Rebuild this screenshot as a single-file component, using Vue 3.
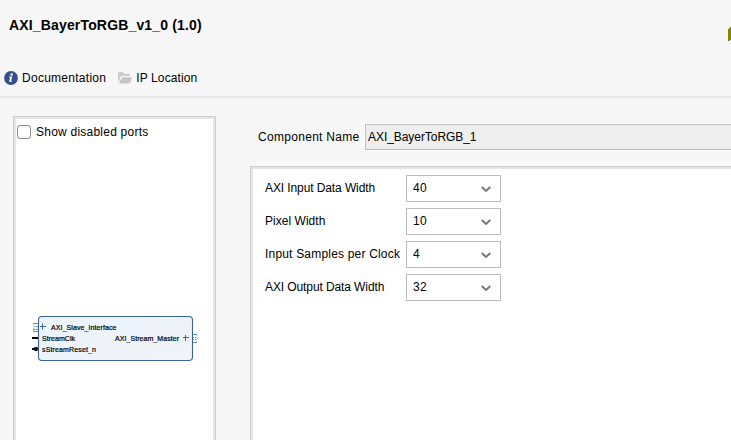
<script setup>
import { ref } from 'vue'

const showDisabled = ref(false)
const params = [
  { label: 'AXI Input Data Width', value: '40', cls: 'w-input' },
  { label: 'Pixel Width', value: '10', cls: 'w-pixel' },
  { label: 'Input Samples per Clock', value: '4', cls: 'w-samples' },
  { label: 'AXI Output Data Width', value: '32', cls: 'w-output' },
]
</script>

<template>
  <div class="window">
    <header class="header">
      <h1 class="title">AXI_BayerToRGB_v1_0 (1.0)</h1>
      <svg class="busy" width="3" height="16" viewBox="0 0 3 16" shape-rendering="crispEdges">
        <path d="M0 3L1 1L3 0V12L1 14H0Z" fill="#848500" />
      </svg>
      <nav class="toolbar">
        <a class="tool">
          <svg width="14" height="14" viewBox="0 0 14 14">
            <circle cx="7" cy="7" r="6.9" fill="#33508a" />
            <circle cx="7.7" cy="3.4" r="1.2" fill="#fff" />
            <path d="M5.2 5.5H8.3L7.2 10H8.2L7.9 10.8H5L6 6.4H5Z" fill="#fff" />
          </svg>
          <span class="doc">Documentation</span>
        </a>
        <a class="tool">
          <svg width="14" height="12" viewBox="0 0 14 12">
            <path d="M0 1Q0 0 1 0H4.5L6 1.8H11Q12 1.8 12 3V4H4Q2.8 4 2.3 5.2L0 11Z" fill="#cbcbcb" />
            <path d="M4.2 5.2H14L12.4 10.3Q12 11.5 10.8 11.5H0.8Z" fill="#c5c5c5" />
          </svg>
          <span class="loc">IP Location</span>
        </a>
      </nav>
    </header>

    <main class="body">
      <section class="ports">
        <label class="toggle">
          <input v-model="showDisabled" type="checkbox" class="check" />
          <span>Show disabled ports</span>
        </label>
        <svg class="diagram" width="170" height="50" viewBox="30 314 170 50">
          <defs>
            <linearGradient id="blockFill" x1="0" y1="0" x2="1" y2="1">
              <stop offset="0" stop-color="#ecf3fc" />
              <stop offset="1" stop-color="#f1f4f7" />
            </linearGradient>
          </defs>
          <rect x="38.5" y="316.5" width="154" height="44" rx="3.5" fill="url(#blockFill)" stroke="#3c62a0" stroke-width="1.1" />
          <g fill="none" stroke="#5c8fbd" shape-rendering="crispEdges">
            <path d="M33 323.5H38M33 331.5H38M193 334.5H197M193 342.5H197" />
            <path d="M33 326.5H35M36 326.5H38M33 329.5H35M36 329.5H38" />
            <path d="M193 337.5H194M195 337.5H197M193 339.5H194M195 339.5H197" />
          </g>
          <path d="M33.5 324V332M196.5 335V342" stroke="#a9cbe3" stroke-dasharray="1 1" />
          <path d="M40 326.5H46M42.5 323.5V329.5M183 337.5H189M185.5 335V341" stroke="#3c62a0" stroke-width="1" />
          <path d="M32 338H38M32 349H36" stroke="#000" stroke-width="2" />
          <circle cx="36" cy="349" r="2.2" fill="#111" />
          <g class="pins">
            <text x="51" y="330" textLength="65.5">AXI_Slave_Interface</text>
            <text x="42" y="341" textLength="33">StreamClk</text>
            <text x="42" y="352" textLength="54">sStreamReset_n</text>
            <text x="115" y="341" textLength="64">AXI_Stream_Master</text>
          </g>
        </svg>
      </section>

      <section class="config">
        <div class="name-row">
          <span class="name-label">Component Name</span>
          <div class="name-field">AXI_BayerToRGB_1</div>
        </div>
        <div class="params">
          <div v-for="p in params" :key="p.label" class="param">
            <span class="param-label"><span :class="p.cls">{{ p.label }}</span></span>
            <div class="combo">
              <span class="value">{{ p.value }}</span>
              <svg width="10" height="7" viewBox="0 0 10 7">
                <path d="M0.7 1L5 5L9.3 1" fill="none" stroke="#777" stroke-width="2" />
              </svg>
            </div>
          </div>
        </div>
      </section>
    </main>
  </div>
</template>

<style>
body { margin: 0; background: #f7f7f7; }
</style>

<style scoped>
.window {
  box-sizing: border-box;
  width: 731px;
  height: 440px;
  overflow: hidden;
  display: flex;
  flex-direction: column;
  background: #f7f7f7;
  color: #000;
  font: 12px/16px "Liberation Sans", Arial, sans-serif;
  white-space: nowrap;
}
.header {
  position: relative;
  box-sizing: border-box;
  height: 98px;
  padding: 17px 0 0 4px;
  border-bottom: 2px solid #e6e6e6;
}
.title { margin: 0 0 0 5px; font-size: 14px; line-height: 16px; font-weight: bold; letter-spacing: 0.16px; }
.busy { position: absolute; right: 0; top: 27px; }
.toolbar { display: flex; gap: 12px; margin-top: 37px; }
.tool { display: flex; align-items: center; gap: 4px; height: 16px; }
.doc { letter-spacing: 0.27px; }
.loc { letter-spacing: 0.12px; }
.body { flex: 1; display: flex; min-height: 0; }
.ports {
  box-sizing: border-box;
  width: 203px;
  height: 340px;
  margin: 18px 34px 0 13px;
  border: 1px solid #cdcdcd;
  border-bottom: 0;
  box-shadow: inset 2px 2px 0 #e6e6e6, inset -2px 0 0 #e6e6e6;
  background: #fff;
  padding: 7px 0 0 3px;
  display: flex;
  flex-direction: column;
}
.toggle { display: flex; align-items: center; gap: 5px; height: 16px; letter-spacing: 0.23px; }
.check {
  appearance: none;
  box-sizing: border-box;
  width: 14px;
  height: 14px;
  margin: 0;
  border: 1px solid #8a8a8a;
  border-radius: 3px;
  background: #fff;
}
.diagram { margin: 174px 0 0 13px; }
.pins { font-size: 7px; fill: #000; stroke: #000; stroke-width: 0.2; }
.config { flex: 1; display: flex; flex-direction: column; min-width: 0; }
.name-row { display: flex; align-items: center; padding: 26px 0 0 8px; }
.name-label { width: 107px; letter-spacing: 0.3px; }
.name-field {
  flex: 1;
  box-sizing: border-box;
  height: 26px;
  line-height: 24px;
  padding-left: 2px;
  border: 1px solid #bcbcbc;
  border-right: 0;
  box-shadow: 0 0 0 1px #fff;
  background: #eee;
  letter-spacing: -0.06px;
}
.params {
  flex: 1;
  margin-top: 16px;
  padding: 8px 0 0 14px;
  border-top: 1px solid #cdcdcd;
  border-left: 1px solid #cdcdcd;
  box-shadow: inset 2px 2px 0 #e6e6e6;
  background: #fff;
  display: flex;
  flex-direction: column;
  gap: 6px;
}
.param { display: flex; height: 27px; }
.param-label { width: 141px; line-height: 26px; }
.combo {
  box-sizing: border-box;
  width: 95px;
  height: 27px;
  padding: 0 9px 0 6px;
  border: 1px solid #bcbcbc;
  background: #fff;
  display: flex;
  align-items: center;
  justify-content: space-between;
  letter-spacing: 0.3px;
}
.value { margin-bottom: 2px; }
.combo svg { margin-top: 2px; }
.w-input, .w-output { letter-spacing: -0.1px; }
.w-pixel { letter-spacing: 0.03px; }
.w-samples { letter-spacing: 0.19px; }
</style>
